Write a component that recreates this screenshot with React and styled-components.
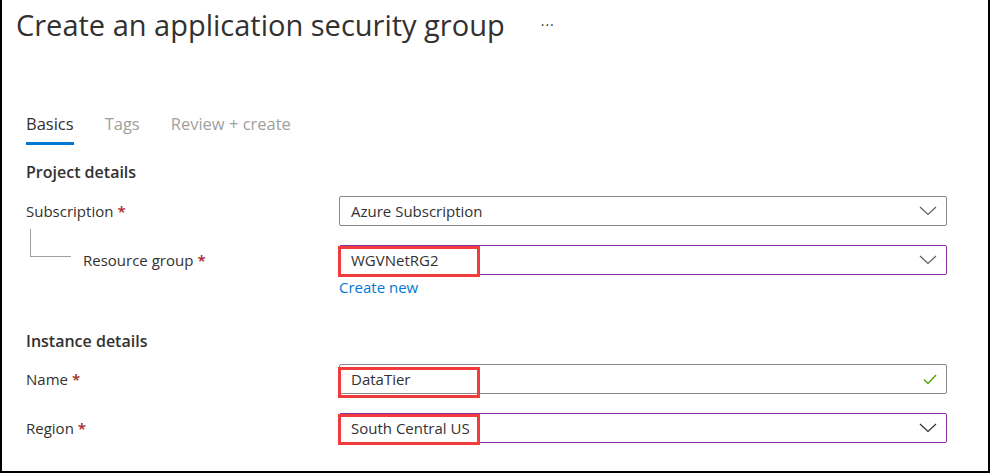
import React from "react";
import styled, { createGlobalStyle } from "styled-components";

const GlobalStyle = createGlobalStyle`
  html, body {
    margin: 0;
    padding: 0;
    background: #ffffff;
  }
  body {
    font-family: "Open Sans", "Noto Sans", sans-serif;
    color: #323130;
  }
`;

const Page = styled.div`
  box-sizing: border-box;
  width: 990px;
  height: 473px;
  border-left: 2px solid #000;
  border-right: 2px solid #000;
  border-bottom: 2px solid #000;
  background: #fff;
  overflow: hidden;
`;

const Header = styled.div`
  display: flex;
  align-items: center;
  padding: 7px 0 0 14px;
`;

const Title = styled.h1`
  margin: 0;
  font-size: 29px;
  font-weight: 400;
  line-height: 36px;
  color: #323130;
  white-space: nowrap;
`;

const More = styled.span`
  margin-left: 36px;
  font-size: 14px;
  letter-spacing: 1px;
  color: #323130;
  line-height: 36px;
`;

const Body = styled.div`
  padding: 0 41px 0 24px;
`;

const TabBar = styled.div`
  display: flex;
  gap: 31px;
  margin-top: 69px;
`;

const Tab = styled.div`
  font-size: 16.5px;
  line-height: 24px;
  padding-bottom: 6px;
  border-bottom: 3px solid ${(p) => (p.$active ? "#0078d4" : "transparent")};
  color: ${(p) => (p.$active ? "#323130" : "#a19f9d")};
`;

const SectionTitle = styled.h2`
  margin: ${(p) => p.$top}px 0 0;
  font-size: 16px;
  font-weight: 600;
  line-height: 22px;
  color: #323130;
`;

const Row = styled.div`
  display: grid;
  grid-template-columns: 313px 1fr;
  align-items: center;
  margin-top: ${(p) => p.$top}px;
`;

const LabelCell = styled.div`
  display: flex;
  align-items: center;
  height: 30px;
`;

const Connector = styled.span`
  align-self: flex-start;
  width: 41px;
  height: 28px;
  margin: -16px 0 0 4px;
  border-left: 1px solid #a19f9d;
  border-bottom: 1px solid #a19f9d;
  box-sizing: border-box;
`;

const Label = styled.span`
  font-size: 15px;
  line-height: 20px;
  margin-left: ${(p) => p.$indent || 0}px;
  color: #323130;
`;

const Required = styled.span`
  color: #a4262c;
  margin-left: 4px;
  font-weight: 600;
`;

const ControlWrap = styled.div`
  position: relative;
`;

const Control = styled.div`
  box-sizing: border-box;
  height: 30px;
  display: flex;
  align-items: center;
  justify-content: space-between;
  padding: 0 9px 0 11px;
  border: 1px solid ${(p) => (p.$focus ? "#8a2da5" : "#8a8886")};
  border-radius: 2px;
  background: #fff;
  font-size: 15px;
  color: #323130;
`;

const Highlight = styled.span`
  position: absolute;
  left: -1px;
  top: ${(p) => p.$top}px;
  width: 142px;
  height: 31px;
  box-sizing: border-box;
  border: 3px solid #f23c3c;
  pointer-events: none;
`;

const Link = styled.a`
  display: block;
  margin-top: 2px;
  font-size: 15px;
  line-height: 20px;
  color: #0078d4;
  text-decoration: none;
`;

const Chevron = ({ color = "#605e5c" }) => (
  <svg width="18" height="10" viewBox="0 0 18 10">
    <polyline points="1,1 9,8.5 17,1" fill="none" stroke={color} strokeWidth="1.2" />
  </svg>
);

const Check = () => (
  <svg width="14" height="11" viewBox="0 0 14 11">
    <polyline points="1,5.5 5,9.5 13,1" fill="none" stroke="#57a300" strokeWidth="1.4" />
  </svg>
);

const Field = ({ label, value, icon, focus, highlight, top, indent, tree, hlTop = 1 }) => (
  <Row $top={top}>
    <LabelCell>
      {tree && <Connector />}
      <Label $indent={indent}>
        {label}
        <Required>*</Required>
      </Label>
    </LabelCell>
    <ControlWrap>
      <Control $focus={focus}>
        <span>{value}</span>
        {icon}
      </Control>
      {highlight && <Highlight $top={hlTop} />}
    </ControlWrap>
  </Row>
);

const App = () => {
  return (
    <>
      <GlobalStyle />
      <Page>
        <Header>
          <Title>Create an application security group</Title>
          <More>···</More>
        </Header>
        <Body>
          <TabBar>
            <Tab $active>Basics</Tab>
            <Tab>Tags</Tab>
            <Tab>Review + create</Tab>
          </TabBar>

          <SectionTitle $top={16}>Project details</SectionTitle>
          <Field label="Subscription" value="Azure Subscription" icon={<Chevron />} top={13} />
          <Field
            label="Resource group"
            value="WGVNetRG2"
            icon={<Chevron />}
            focus
            highlight
            tree
            indent={12}
            top={19}
          />
          <Row $top={0}>
            <span />
            <Link href="#">Create new</Link>
          </Row>

          <SectionTitle $top={33}>Instance details</SectionTitle>
          <Field label="Name" value="DataTier" icon={<Check />} highlight hlTop={3} top={12} />
          <Field
            label="Region"
            value="South Central US"
            icon={<Chevron color="#323130" />}
            focus
            highlight
            top={19}
          />
        </Body>
      </Page>
    </>
  );
};

export default App;
